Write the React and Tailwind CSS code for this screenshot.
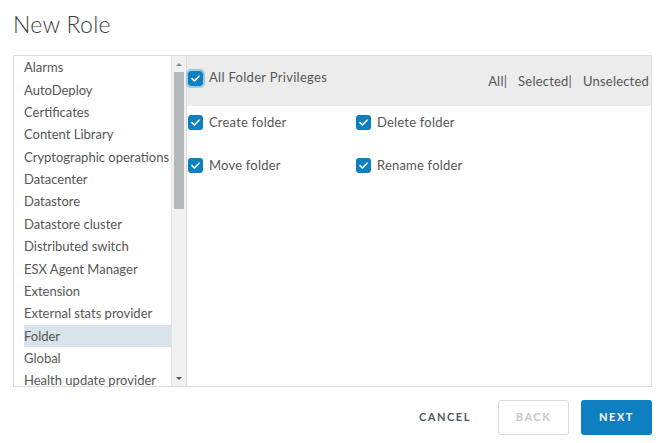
import React from "react"

const items = [
    "Alarms",
    "AutoDeploy",
    "Certificates",
    "Content Library",
    "Cryptographic operations",
    "Datacenter",
    "Datastore",
    "Datastore cluster",
    "Distributed switch",
    "ESX Agent Manager",
    "Extension",
    "External stats provider",
    "Folder",
    "Global",
    "Health update provider",
]

const Check = ({ focus }) => (
    <span className={`flex h-[15px] w-[15px] shrink-0 items-center justify-center rounded-[3px] bg-[#0e7fc0] ${focus ? "outline outline-2 outline-[#9ec8e4]" : ""}`}>
        <svg width="9" height="7" viewBox="0 0 9 7" fill="none">
            <path d="M1 3.6 L3.4 6 L8 1.2" stroke="white" strokeWidth="1.6" strokeLinecap="round" strokeLinejoin="round" />
        </svg>
    </span>
)

const Priv = ({ label }) => (
    <label className="flex items-center gap-[6px] text-[13px] tracking-[0.2px] text-[#565656]">
        <Check />
        <span>{label}</span>
    </label>
)

const App = () => {
    return (
        <div className="flex h-[443px] w-[662px] flex-col bg-white pl-[13px] pr-[10px] font-['Lato',sans-serif]">
            <h1 className="pt-[9px] text-[23px] font-light leading-[30px] tracking-[0.3px] text-[#3c3c3c]">New Role</h1>

            <div className="mt-[16px] flex h-[332px]">
                {/* category list */}
                <div className="flex w-[174px] border border-[#dcdcdc]">
                    <ul className="flex-1 pl-[10px] pt-[1px]">
                        {items.map((item) => (
                            <li
                                key={item}
                                className={`flex h-[22.35px] items-center text-[13px] text-[#565656] ${item === "Folder" ? "bg-[#d9e4ea]" : ""}`}
                            >
                                {item}
                            </li>
                        ))}
                    </ul>
                    <div className="flex w-[15px] flex-col border-l border-[#e4e4e4] bg-[#f1f1f1]">
                        <div className="flex h-[16px] items-center justify-center">
                            <span className="h-0 w-0 border-x-[3px] border-b-[3px] border-x-transparent border-b-[#8a8a8a]"></span>
                        </div>
                        <div className="mx-[2px] h-[137px] bg-[#b4b9bc]"></div>
                        <div className="flex-1"></div>
                        <div className="flex h-[16px] items-center justify-center">
                            <span className="h-0 w-0 border-x-[3px] border-t-[3px] border-x-transparent border-t-[#555]"></span>
                        </div>
                    </div>
                </div>

                {/* privileges */}
                <div className="flex-1 border border-l-0 border-[#dcdcdc]">
                    <div className="flex h-[50px] items-start justify-between bg-[#ececec] pl-[1px] pr-[2px] pt-[14px]">
                        <label className="flex items-center gap-[6px] text-[13px] tracking-[0.3px] text-[#565656]">
                            <Check focus />
                            <span className="-mt-[2px]">All Folder Privileges</span>
                        </label>
                        <div className="mt-[2px] flex gap-[11px] text-[13px] tracking-[0.2px] text-[#565656]">
                            <span>All|</span>
                            <span>Selected|</span>
                            <span>Unselected</span>
                        </div>
                    </div>
                    <div className="grid grid-cols-[168px_1fr] gap-y-[23.5px] pl-[1px] pt-[7px]">
                        <Priv label="Create folder" />
                        <Priv label="Delete folder" />
                        <Priv label="Move folder" />
                        <Priv label="Rename folder" />
                    </div>
                </div>
            </div>

            <div className="mt-[13px] flex justify-end gap-[12px]">
                <button className="h-[35px] w-[82px] text-[11px] font-bold tracking-[0.14em] text-[#505a63]">CANCEL</button>
                <button className="h-[35px] w-[71px] rounded-[3px] border border-[#d6dde2] bg-white text-[11px] font-bold tracking-[0.14em] text-[#c3c9ce]">BACK</button>
                <button className="h-[35px] w-[71px] rounded-[3px] bg-[#0e7fc0] text-[11px] font-bold tracking-[0.14em] text-white">NEXT</button>
            </div>
        </div>
    )
}

export default App
